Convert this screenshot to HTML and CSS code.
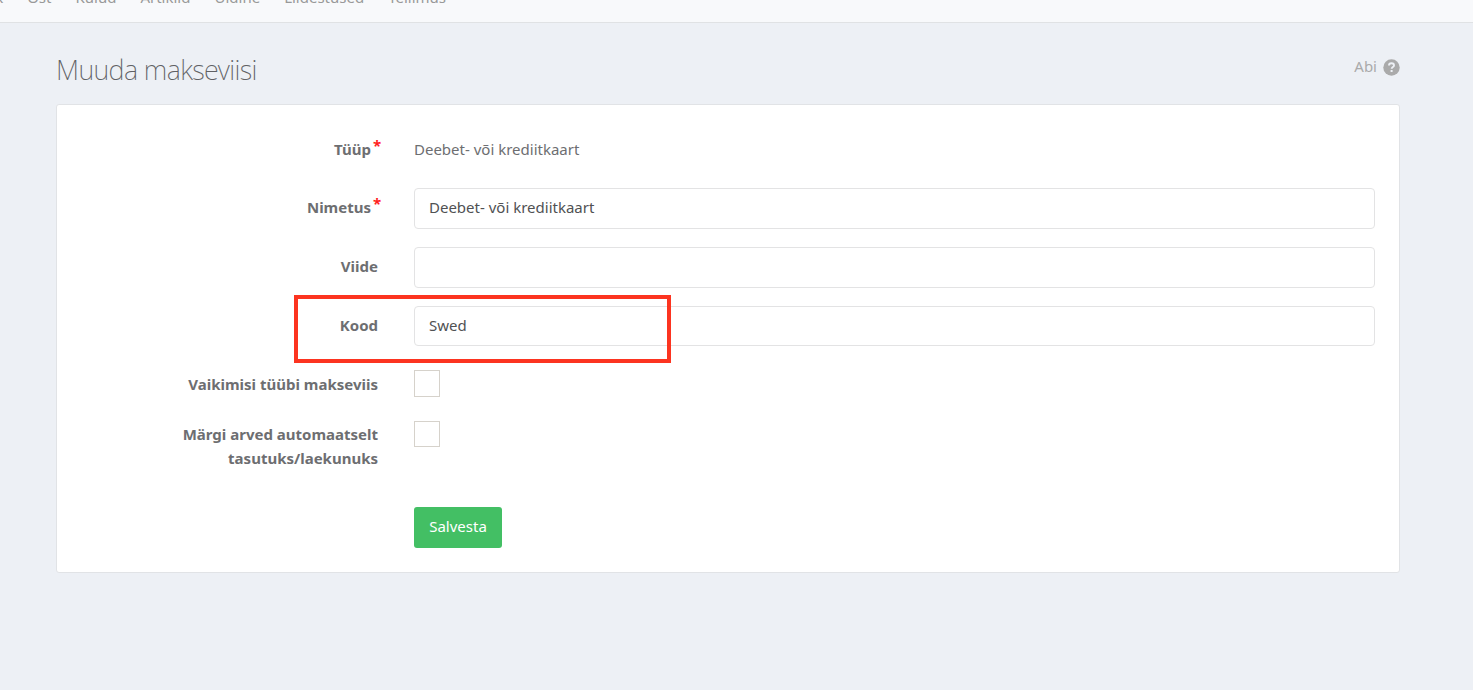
FILE: index.html
```html
<!DOCTYPE html>
<html lang="et">

<head>
    <meta charset="UTF-8">
    <meta name="viewport" content="width=device-width, initial-scale=1.0">
    <title>Muuda makseviisi</title>
    <link rel="stylesheet" href="styles.css">
</head>

<body>

    <!-- Top menu -->
    <nav class="navbar">
        <a href="#">Müük</a>
        <a href="#">Ost</a>
        <a href="#">Kulud</a>
        <a href="#">Artiklid</a>
        <a href="#">Üldine</a>
        <a href="#">Liidestused</a>
        <a href="#">Tellimus</a>
    </nav>

    <main class="page">
        <div class="page-header">
            <h1>Muuda makseviisi</h1>
            <a class="help" href="#">
                <span>Abi</span>
                <svg width="17" height="17" viewBox="0 0 17 17">
                    <circle cx="8.5" cy="8.5" r="8.2" fill="#aaa" />
                    <path d="M6 6.6C6 5 7.1 4.3 8.5 4.3s2.5.9 2.5 2.1c0 1.7-2.3 1.7-2.3 3.4" fill="none" stroke="#edf0f5" stroke-width="1.9" />
                    <rect x="7.6" y="11" width="2" height="2" fill="#edf0f5" />
                </svg>
            </a>
        </div>

        <form class="card">
            <div class="row row-static">
                <label>Tüüp<span class="required">*</span></label>
                <span class="static">Deebet- või krediitkaart</span>
            </div>
            <div class="row">
                <label for="name">Nimetus<span class="required">*</span></label>
                <input type="text" id="name" value="Deebet- või krediitkaart">
            </div>
            <div class="row">
                <label for="ref">Viide</label>
                <input type="text" id="ref">
            </div>
            <div class="row row-code">
                <label for="code">Kood</label>
                <input type="text" id="code" value="Swed">
                <div class="highlight"></div>
            </div>
            <div class="row row-check">
                <label for="default">Vaikimisi tüübi makseviis</label>
                <input type="checkbox" id="default">
            </div>
            <div class="row row-check row-auto">
                <label for="auto">Märgi arved automaatselt tasutuks/laekunuks</label>
                <input type="checkbox" id="auto">
            </div>
            <div class="actions">
                <button type="button">Salvesta</button>
            </div>
        </form>
    </main>

</body>

</html>
```
FILE: styles.css
```css
* {
    box-sizing: border-box;
}

body {
    margin: 0;
    background-color: #edf0f5;
    color: #6d6e71;
    font-family: "Noto Sans", "Open Sans", sans-serif;
    font-size: 15px;
    line-height: 24px;
    height: 690px;
    overflow: hidden;
}

/* Top menu, scrolled partly out of view */
.navbar {
    display: flex;
    gap: 24px;
    height: 23px;
    margin-left: -37px;
    background-color: #f8f9fb;
    border-bottom: 1px solid #e0e2e4;
}

.navbar a {
    margin-top: -15px;
    height: 24px;
    color: #999;
    text-decoration: none;
    white-space: nowrap;
}

.page {
    padding: 0 73px 0 56px;
}

.page-header {
    display: flex;
    justify-content: space-between;
    height: 81px;
    padding-top: 27px;
}

h1 {
    margin: 0;
    color: #606164;
    font-size: 27px;
    font-weight: 200;
    line-height: 40px;
    letter-spacing: -0.6px;
}

.help {
    display: flex;
    align-items: center;
    gap: 6px;
    height: 34px;
    color: #aaa;
    text-decoration: none;
}

.help span {
    margin-top: -2px;
}

.card {
    height: 469px;
    padding: 32px 24px 0 0;
    background-color: #fff;
    border: 1px solid #e1e3e6;
    border-radius: 3px;
}

.row {
    display: grid;
    grid-template-columns: 321px 1fr;
    column-gap: 36px;
    align-items: start;
    height: 59px;
}

.row-static {
    height: 51px;
}

.row label {
    padding-top: 7px;
    font-weight: 700;
    text-align: right;
}

.row-static label,
.row-static .static {
    padding-top: 0;
}

.required {
    display: inline-block;
    width: 7px;
    margin: 0 -2px 0 2px;
    color: #f22;
    line-height: 16px;
    vertical-align: 4px;
}

input[type="text"] {
    width: 100%;
    height: 41px;
    margin: 0;
    padding: 0 14px 3px;
    border: 1px solid #e3e3e4;
    border-radius: 4px;
    background-color: #fff;
    color: #505153;
    font: inherit;
}

/* Marks the code field */
.row-code {
    position: relative;
}

.row-code input[type="text"] {
    height: 40px;
    padding-bottom: 2px;
}

.highlight {
    position: absolute;
    top: -11px;
    left: 237px;
    width: 377px;
    height: 68px;
    border: 4px solid #fc3420;
}

.row-check {
    height: 51px;
}

input[type="checkbox"] {
    appearance: none;
    width: 26px;
    height: 27px;
    margin: 5px 0 0;
    border: 1px solid #d6d2cb;
    background-color: #fff;
}

.row-auto {
    height: 91px;
}

.row-auto label {
    padding-top: 6px;
    padding-left: 110px;
}

.row-auto input[type="checkbox"] {
    height: 26px;
}

.actions {
    padding-left: 357px;
}

button {
    width: 88px;
    height: 41px;
    padding: 0 0 3px;
    border: none;
    border-radius: 3px;
    background-color: #43bf64;
    color: #fff;
    font: inherit;
}
```
